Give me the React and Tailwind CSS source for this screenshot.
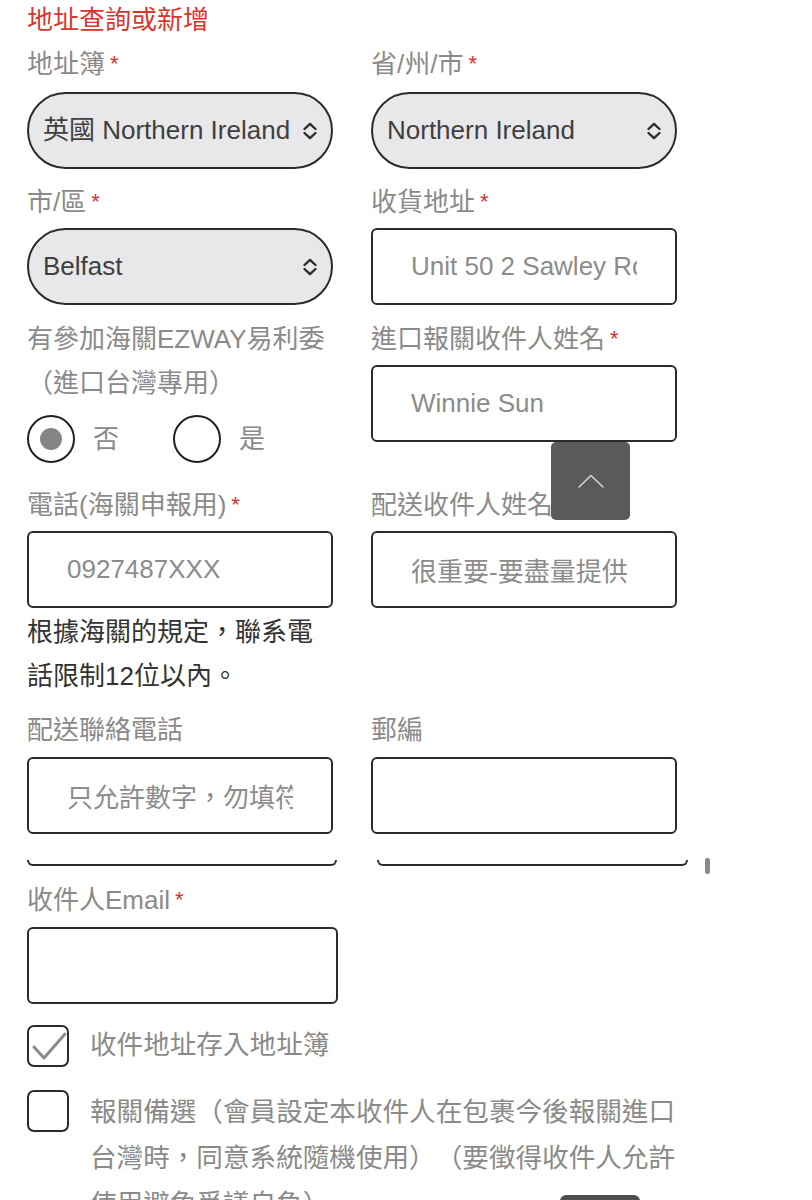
import React from "react";

// Address lookup / create form (mobile layout, 2-column fields).

const FONT = "font-['Liberation_Sans','Noto_Sans_CJK_TC',sans-serif]";

function Label({ text, required, className = "" }) {
  return (
    <div className={`h-[44px] leading-[44px] text-[26px] text-[#8a8a8a] whitespace-nowrap ${className}`}>
      {text}
      {required ? <span className="relative -top-[2px] ml-[5px] text-[22px] text-[#d8312f]">*</span> : null}
    </div>
  );
}

function UpDown() {
  return (
    <svg width="16" height="18" viewBox="0 0 16 18" fill="none" stroke="#2e2e2e" strokeWidth="2.4" strokeLinecap="round" strokeLinejoin="round" className="shrink-0">
      <path d="M2.5 7 L8 1.8 L13.5 7" />
      <path d="M2.5 11 L8 16.2 L13.5 11" />
    </svg>
  );
}

function Select({ value, className = "" }) {
  return (
    <div
      className={`h-[77px] w-[306px] rounded-full border-2 border-[#2b2b2b] bg-[#e8e8ea] flex items-center pl-[14px] pr-[13px] gap-2 ${className}`}
    >
      <span className="flex-1 min-w-0 truncate text-[26px] text-[#3f3f3f]">{value}</span>
      <UpDown />
    </div>
  );
}

function TextBox({ value = "", wide = false, className = "" }) {
  return (
    <input
      readOnly
      value={value}
      className={`block h-[77px] ${wide ? "w-[311px]" : "w-[306px]"} rounded-[6px] border-2 border-[#2b2b2b] bg-white px-[38px] text-[26px] text-[#8c8c8c] outline-none ${FONT} ${className}`}
    />
  );
}

function Radio({ checked, label }) {
  return (
    <div className="flex items-center">
      <span className="w-[48px] h-[48px] rounded-full border-2 border-[#222] flex items-center justify-center">
        {checked ? <span className="w-[22px] h-[22px] rounded-full bg-[#858585]" /> : null}
      </span>
      <span className="ml-[18px] text-[26px] text-[#8a8a8a]">{label}</span>
    </div>
  );
}

function Checkbox({ checked }) {
  return (
    <span className="relative w-[42px] h-[42px] shrink-0 rounded-[7px] border-2 border-[#2b2b2b] bg-white">
      {checked ? (
        <svg className="absolute left-0 top-0" width="42" height="42" viewBox="0 0 42 42" fill="none" stroke="#8a8a8a" strokeWidth="3" strokeLinecap="round" strokeLinejoin="round">
          <path d="M5 20 L15 31 L36 7" />
        </svg>
      ) : null}
    </span>
  );
}

export default function App() {
  return (
    <div className={`relative w-[812px] min-h-[1200px] bg-white pl-[27px] [text-spacing-trim:space-all] ${FONT}`}>
      <div className="h-[40px] leading-[40px] text-[26px] text-[#d9362e]">地址查詢或新增</div>

      {/* row 1 */}
      <div className="flex gap-x-[38px] mt-[2px]">
        <div>
          <Label text="地址簿" required />
          <Select value="英國 Northern Ireland" className="mt-[6px]" />
        </div>
        <div>
          <Label text="省/州/市" required />
          <Select value="Northern Ireland" className="mt-[6px]" />
        </div>
      </div>

      {/* row 2 */}
      <div className="flex gap-x-[38px] mt-[11px]">
        <div>
          <Label text="市/區" required />
          <Select value="Belfast" className="mt-[4px]" />
        </div>
        <div>
          <Label text="收貨地址" required />
          <TextBox value="Unit 50 2 Sawley Rd" className="mt-[4px]" />
        </div>
      </div>

      {/* row 3 */}
      <div className="flex gap-x-[38px] mt-[12px]">
        <div className="w-[306px]">
          <div className="text-[26px] leading-[44px] text-[#8a8a8a] whitespace-nowrap">
            有參加海關EZWAY易利委
            <br />
            （進口台灣專用）
          </div>
          <div className="flex items-center gap-[54px] mt-[10px]">
            <Radio checked label="否" />
            <Radio label="是" />
          </div>
        </div>
        <div>
          <Label text="進口報關收件人姓名" required />
          <TextBox value="Winnie Sun" className="mt-[4px]" />
        </div>
      </div>

      {/* row 4 */}
      <div className="flex gap-x-[38px] mt-[20px]">
        <div className="w-[306px]">
          <Label text="電話(海關申報用)" required />
          <TextBox value="0927487XXX" className="mt-[4px]" />
          <div className="mt-[2px] text-[26px] leading-[44px] text-[#333]">
            根據海關的規定，聯系電
            <br />
            話限制12位以內。
          </div>
        </div>
        <div>
          <Label text="配送收件人姓名" required />
          <TextBox value="很重要-要盡量提供" className="mt-[4px]" />
        </div>
      </div>

      {/* row 5 */}
      <div className="flex gap-x-[38px] mt-[10px]">
        <div>
          <Label text="配送聯絡電話" />
          <TextBox value="只允許數字，勿填符號" className="mt-[5px]" />
        </div>
        <div>
          <Label text="郵編" />
          <TextBox className="mt-[5px]" />
        </div>
      </div>

      {/* clipped box bottoms */}
      <div className="flex items-start h-[6px] mt-[26px]">
        <div className="w-[310px] h-[6px] border-2 border-t-0 border-[#2b2b2b] rounded-b-[6px]" />
        <div className="ml-[40px] w-[311px] h-[6px] border-2 border-t-0 border-[#2b2b2b] rounded-b-[6px]" />
        <div className="ml-[17px] -mt-[2px] w-[5px] h-[16px] rounded-[2px] bg-[#8a8a8a]" />
      </div>

      <Label text="收件人Email" required className="mt-[12px]" />
      <TextBox wide className="mt-[5px]" />

      <div className="flex items-center mt-[21px]">
        <Checkbox checked />
        <span className="ml-[21px] text-[26.6px] text-[#8a8a8a]">收件地址存入地址簿</span>
      </div>

      <div className="flex items-start mt-[23px]">
        <Checkbox />
        <div className="ml-[21px] -mt-px text-[26.6px] leading-[46px] text-[#8a8a8a] whitespace-nowrap">
          報關備選（會員設定本收件人在包裹今後報關進口
          <br />
          台灣時，同意系統隨機使用）（要徵得收件人允許
          <br />
          使用避免爭議自負）
        </div>
      </div>

      {/* floating back-to-top buttons */}
      <div className="absolute left-[551px] top-[442px] w-[79px] h-[78px] rounded-[5px] bg-[#5a5a5a] flex items-center justify-center">
        <svg width="28" height="16" viewBox="0 0 28 16" fill="none" stroke="#d4d4d4" strokeWidth="1.6" strokeLinecap="round" strokeLinejoin="round">
          <path d="M2 14 L14 2.5 L26 14" />
        </svg>
      </div>
      <div className="absolute left-[560px] top-[1195px] w-[80px] h-[78px] rounded-[6px] bg-[#505050]" />
    </div>
  );
}
